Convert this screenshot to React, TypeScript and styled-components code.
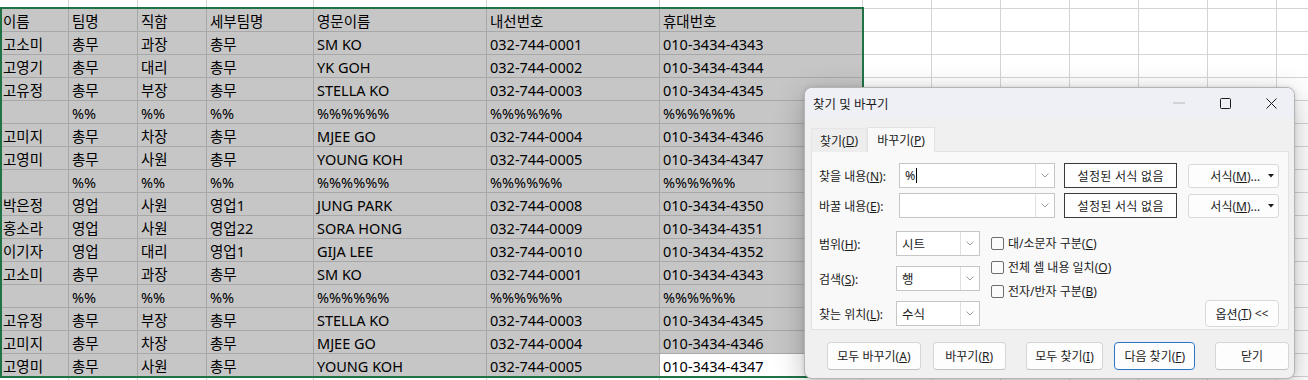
import React from "react";
import styled, { createGlobalStyle } from "styled-components";

const COLS = [69, 69, 69, 107, 173, 173, 203, 69, 69, 69, 69, 69, 69, 69];
const SEL_COLS = 7;

const HEADER = ["이름", "팀명", "직함", "세부팀명", "영문이름", "내선번호", "휴대번호"];
const PCT = ["", "%%", "%%", "%%", "%%%%%%", "%%%%%%", "%%%%%%"];

const ROWS: string[][] = [
  HEADER,
  ["고소미", "총무", "과장", "총무", "SM KO", "032-744-0001", "010-3434-4343"],
  ["고영기", "총무", "대리", "총무", "YK GOH", "032-744-0002", "010-3434-4344"],
  ["고유정", "총무", "부장", "총무", "STELLA KO", "032-744-0003", "010-3434-4345"],
  PCT,
  ["고미지", "총무", "차장", "총무", "MJEE GO", "032-744-0004", "010-3434-4346"],
  ["고영미", "총무", "사원", "총무", "YOUNG KOH", "032-744-0005", "010-3434-4347"],
  PCT,
  ["박은정", "영업", "사원", "영업1", "JUNG PARK", "032-744-0008", "010-3434-4350"],
  ["홍소라", "영업", "사원", "영업22", "SORA HONG", "032-744-0009", "010-3434-4351"],
  ["이기자", "영업", "대리", "영업1", "GIJA LEE", "032-744-0010", "010-3434-4352"],
  ["고소미", "총무", "과장", "총무", "SM KO", "032-744-0001", "010-3434-4343"],
  PCT,
  ["고유정", "총무", "부장", "총무", "STELLA KO", "032-744-0003", "010-3434-4345"],
  ["고미지", "총무", "차장", "총무", "MJEE GO", "032-744-0004", "010-3434-4346"],
  ["고영미", "총무", "사원", "총무", "YOUNG KOH", "032-744-0005", "010-3434-4347"],
];

const GlobalStyle = createGlobalStyle`
  body {
    margin: 0;
    background: #fff;
    overflow: hidden;
    font-family: "Noto Sans", "Noto Sans CJK KR", sans-serif;
  }
`;

const Page = styled.div`
  position: relative;
  width: 1308px;
  height: 380px;
  overflow: hidden;
`;

const Sheet = styled.div`
  display: grid;
  grid-template-columns: ${COLS.map((c) => c + "px").join(" ")};
  grid-template-rows: 9px repeat(17, 23px);
`;

const Cell = styled.div<{ $sel?: boolean; $active?: boolean }>`
  box-sizing: border-box;
  border-right: 1px solid ${({ $sel }) => ($sel ? "#a8a8a8" : "#d4d4d4")};
  border-bottom: 1px solid ${({ $sel }) => ($sel ? "#a8a8a8" : "#d4d4d4")};
  background: ${({ $sel, $active }) => ($sel && !$active ? "#c6c6c6" : "#fff")};
  padding: 1px 3px 0;
  display: flex;
  align-items: center;
  white-space: nowrap;
  overflow: hidden;
  font-size: 14.5px;
  color: #000;
`;

const Selection = styled.div`
  position: absolute;
  left: 0;
  top: 7px;
  width: 864px;
  height: 371px;
  box-sizing: border-box;
  border: 2px solid #217346;
  pointer-events: none;
`;

/* ---------- dialog ---------- */

const Dialog = styled.div`
  position: absolute;
  left: 804px;
  top: 87px;
  width: 491px;
  height: 292px;
  box-sizing: border-box;
  border: 1px solid #b4b4b4;
  border-radius: 8px;
  background: #f0f0f0;
  box-shadow: 0 8px 30px rgba(0, 0, 0, 0.26), 0 0 4px rgba(0, 0, 0, 0.12);
  overflow: hidden;
  display: flex;
  flex-direction: column;
  font-family: "Noto Sans", "Noto Sans CJK KR", sans-serif;
  font-size: 12px;
  color: #1b1b1b;
`;

const TitleBar = styled.div`
  height: 30px;
  background: #eff0f6;
  display: flex;
  align-items: center;
  padding-left: 8px;
`;

const Title = styled.div`
  flex: 1;
  font-size: 12.5px;
  padding-top: 1px;
`;

const WinButton = styled.div`
  width: 46px;
  height: 30px;
  display: flex;
  align-items: center;
  justify-content: center;
`;

const Body = styled.div`
  flex: 1;
  padding: 9px 5px 0 6px;
  display: flex;
  flex-direction: column;
`;

const Tabs = styled.div`
  display: flex;
  height: 25px;
`;

const Tab = styled.div<{ $active?: boolean; $w: number }>`
  width: ${({ $w }) => $w}px;
  box-sizing: border-box;
  display: flex;
  align-items: center;
  justify-content: center;
  background: ${({ $active }) => ($active ? "#f9f9f9" : "#ededed")};
  border: 1px solid ${({ $active }) => ($active ? "#e2e2e2" : "#e6e6e6")};
  border-bottom: none;
  margin-top: ${({ $active }) => ($active ? 0 : 1)}px;
  position: relative;
  z-index: 1;
  color: #202020;
`;

const Panel = styled.div`
  width: 478px;
  height: 179px;
  box-sizing: border-box;
  background: #f9f9f9;
  border: 1px solid #e2e2e2;
  margin-top: -1px;
  padding: 11px 9px 0 7px;
  display: flex;
  flex-direction: column;
`;

const FieldRow = styled.div`
  display: flex;
  align-items: center;
  height: 25px;
  & + & {
    margin-top: 5px;
  }
`;

const Label = styled.div<{ $w: number }>`
  width: ${({ $w }) => $w}px;
  flex-shrink: 0;
  white-space: nowrap;
`;

const Combo = styled.div<{ $w: number }>`
  width: ${({ $w }) => $w}px;
  height: 25px;
  box-sizing: border-box;
  border: 1px solid #c6c6c6;
  background: #fff;
  display: flex;
  flex-shrink: 0;
`;

const ComboText = styled.div`
  flex: 1;
  padding-left: 5px;
  display: flex;
  align-items: center;
  font-size: 12.5px;
`;

const Caret = styled.span`
  width: 1px;
  height: 15px;
  background: #000;
  margin-left: 1px;
`;

const ComboArrow = styled.div`
  width: 18px;
  border-left: 1px solid #e0e0e0;
  display: flex;
  align-items: center;
  justify-content: center;
`;

const StatusBox = styled.div`
  margin-left: 9px;
  width: 114px;
  height: 25px;
  box-sizing: border-box;
  border: 1px solid #3a3a3a;
  background: #fff;
  display: flex;
  align-items: center;
  justify-content: center;
  letter-spacing: 0.3px;
`;

const FormatButton = styled.div`
  margin-left: 11px;
  width: 91px;
  height: 24px;
  box-sizing: border-box;
  border: 1px solid #d9d9d9;
  border-radius: 3px;
  background: #fdfdfd;
  display: flex;
  align-items: center;
  padding: 0 4px 0 21px;
`;

const FormatText = styled.span`
  flex: 1;
`;

const Options = styled.div`
  margin-top: 13px;
  display: flex;
  align-items: flex-start;
`;

const SelectCol = styled.div`
  display: flex;
  flex-direction: column;
  gap: 5px;
`;

const CheckCol = styled.div`
  margin-left: 11px;
  display: flex;
  flex-direction: column;
`;

const CheckRow = styled.div`
  height: 24px;
  display: flex;
  align-items: center;
  gap: 4px;
`;

const CheckBox = styled.div`
  width: 13px;
  height: 13px;
  box-sizing: border-box;
  border: 1px solid #6e6e6e;
  border-radius: 2px;
  background: #fbfbfb;
`;

const OptionsButton = styled.div`
  margin-left: auto;
  align-self: flex-end;
  margin-bottom: -1px;
  width: 74px;
  height: 27px;
  box-sizing: border-box;
  border: 1px solid #d9d9d9;
  border-radius: 4px;
  background: #fdfdfd;
  display: flex;
  align-items: center;
  justify-content: center;
`;

const ButtonRow = styled.div`
  margin-top: 12px;
  padding-left: 16px;
  display: flex;
`;

const Button = styled.div<{ $w: number; $gap: number; $default?: boolean }>`
  margin-left: ${({ $gap }) => $gap}px;
  width: ${({ $w }) => $w}px;
  height: 28px;
  box-sizing: border-box;
  border: 1px solid ${({ $default }) => ($default ? "#2c74c6" : "#d6d6d6")};
  border-bottom-color: ${({ $default }) => ($default ? "#2c74c6" : "#c2c2c2")};
  border-radius: 4px;
  background: #fdfdfd;
  display: flex;
  align-items: center;
  justify-content: center;
  white-space: nowrap;
`;

const Chevron = () => (
  <svg width="8" height="5" viewBox="0 0 8 5">
    <path d="M0.5 0.5 L4 4 L7.5 0.5" fill="none" stroke="#9a9a9a" strokeWidth="1" />
  </svg>
);

function Mn({ k }: { k: string }) {
  return (
    <>
      (<u>{k}</u>)
    </>
  );
}

function ComboBox({ w, value, caret }: { w: number; value?: string; caret?: boolean }) {
  return (
    <Combo $w={w}>
      <ComboText>
        {value}
        {caret && <Caret />}
      </ComboText>
      <ComboArrow>
        <Chevron />
      </ComboArrow>
    </Combo>
  );
}

function FindReplaceDialog() {
  return (
    <Dialog>
      <TitleBar>
        <Title>찾기 및 바꾸기</Title>
        <WinButton>
          <svg width="12" height="2" viewBox="0 0 12 2">
            <rect x="0" y="0.5" width="12" height="1" fill="#b5b5b5" />
          </svg>
        </WinButton>
        <WinButton>
          <svg width="11" height="11" viewBox="0 0 11 11">
            <rect x="0.5" y="0.5" width="10" height="10" rx="1" fill="none" stroke="#1b1b1b" strokeWidth="1" />
          </svg>
        </WinButton>
        <WinButton>
          <svg width="11" height="11" viewBox="0 0 11 11">
            <path d="M0.5 0.5 L10.5 10.5 M10.5 0.5 L0.5 10.5" stroke="#1b1b1b" strokeWidth="1" />
          </svg>
        </WinButton>
      </TitleBar>
      <Body>
        <Tabs>
          <Tab $w={56}>
            찾기<Mn k="D" />
          </Tab>
          <Tab $w={68} $active>
            바꾸기<Mn k="P" />
          </Tab>
        </Tabs>
        <Panel>
          <FieldRow>
            <Label $w={80}>
              찾을 내용<Mn k="N" />:
            </Label>
            <ComboBox w={156} value="%" caret />
            <StatusBox>설정된 서식 없음</StatusBox>
            <FormatButton>
              <FormatText>
                서식<Mn k="M" />...
              </FormatText>
              <svg width="6" height="4" viewBox="0 0 6 4">
                <path d="M0 0 L6 0 L3 3.5 Z" fill="#1b1b1b" />
              </svg>
            </FormatButton>
          </FieldRow>
          <FieldRow>
            <Label $w={80}>
              바꿀 내용<Mn k="E" />:
            </Label>
            <ComboBox w={156} />
            <StatusBox>설정된 서식 없음</StatusBox>
            <FormatButton>
              <FormatText>
                서식<Mn k="M" />...
              </FormatText>
              <svg width="6" height="4" viewBox="0 0 6 4">
                <path d="M0 0 L6 0 L3 3.5 Z" fill="#1b1b1b" />
              </svg>
            </FormatButton>
          </FieldRow>
          <Options>
            <SelectCol>
              <FieldRow>
                <Label $w={77}>
                  범위<Mn k="H" />:
                </Label>
                <ComboBox w={84} value="시트" />
              </FieldRow>
              <FieldRow>
                <Label $w={77}>
                  검색<Mn k="S" />:
                </Label>
                <ComboBox w={84} value="행" />
              </FieldRow>
              <FieldRow>
                <Label $w={77}>
                  찾는 위치<Mn k="L" />:
                </Label>
                <ComboBox w={84} value="수식" />
              </FieldRow>
            </SelectCol>
            <CheckCol>
              <CheckRow>
                <CheckBox />
                <span>
                  대/소문자 구분<Mn k="C" />
                </span>
              </CheckRow>
              <CheckRow>
                <CheckBox />
                <span>
                  전체 셀 내용 일치<Mn k="O" />
                </span>
              </CheckRow>
              <CheckRow>
                <CheckBox />
                <span>
                  전자/반자 구분<Mn k="B" />
                </span>
              </CheckRow>
            </CheckCol>
            <OptionsButton>
              옵션<Mn k="T" />&nbsp;&lt;&lt;
            </OptionsButton>
          </Options>
        </Panel>
        <ButtonRow>
          <Button $w={94} $gap={0}>
            모두 바꾸기<Mn k="A" />
          </Button>
          <Button $w={73} $gap={12}>
            바꾸기<Mn k="R" />
          </Button>
          <Button $w={78} $gap={20}>
            모두 찾기<Mn k="I" />
          </Button>
          <Button $w={81} $gap={11} $default>
            다음 찾기<Mn k="F" />
          </Button>
          <Button $w={74} $gap={20}>
            닫기
          </Button>
        </ButtonRow>
      </Body>
    </Dialog>
  );
}

export default function App() {
  const lastRow = ROWS.length - 1;
  return (
    <Page>
      <GlobalStyle />
      <Sheet>
        {COLS.map((_, c) => (
          <Cell key={`top-${c}`} />
        ))}
        {ROWS.map((row, r) =>
          COLS.map((_, c) => (
            <Cell
              key={`${r}-${c}`}
              $sel={c < SEL_COLS}
              $active={r === lastRow && c === SEL_COLS - 1}
            >
              {c < SEL_COLS ? row[c] : ""}
            </Cell>
          ))
        )}
        {COLS.map((_, c) => (
          <Cell key={`bottom-${c}`} />
        ))}
      </Sheet>
      <Selection />
      <FindReplaceDialog />
    </Page>
  );
}
